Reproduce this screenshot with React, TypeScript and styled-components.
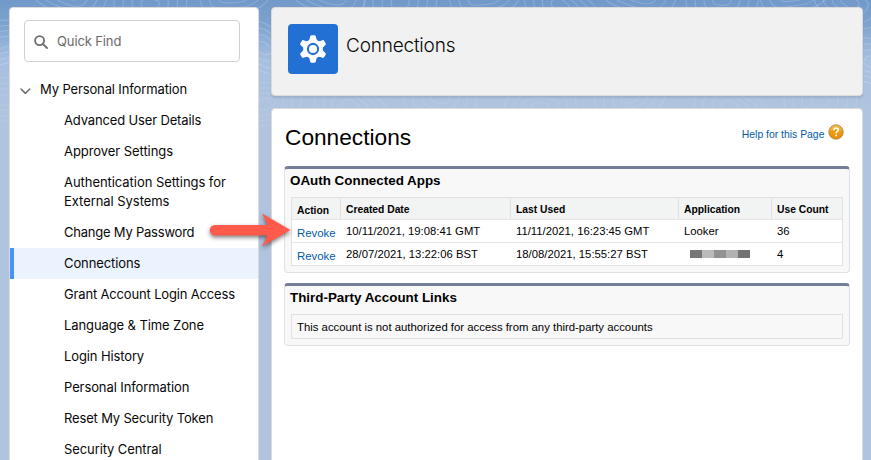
import React from "react";
import styled, { createGlobalStyle } from "styled-components";

const Global = createGlobalStyle`
  * { box-sizing: border-box; }
  html, body { margin: 0; height: 460px; overflow: hidden; }
  body { background: #b0c4df; color: #080707; font-family: "Liberation Sans", Arial, sans-serif; }
`;

const Page = styled.div`
  position: relative;
  display: flex;
  gap: 12px;
  width: 871px;
  height: 460px;
  padding: 7px 8px 0 9px;
  overflow: hidden;
  background: linear-gradient(to bottom, #7199c9 0, #7ea3d0 25px, #a7bfe0 60px, #b0c4df 110px);
`;

const Contours = styled.svg`
  position: absolute;
  inset: 0;
`;

const Sidebar = styled.nav`
  position: relative;
  flex-shrink: 0;
  width: 250px;
  height: 470px;
  padding-top: 12px;
  background: #fff;
  border: 1px solid #dddbda;
  border-radius: 4px;
  font-family: Inter, sans-serif;
  font-size: 13px;
  line-height: 19px;
`;

const Search = styled.div`
  display: flex;
  align-items: center;
  gap: 9px;
  width: 216px;
  height: 42px;
  margin-left: 14px;
  padding: 0 0 0 9px;
  border: 1px solid #d2d0ce;
  border-radius: 4px;
  color: #6b6967;
  letter-spacing: -0.12px;
  svg { position: relative; top: 1px; }
`;

const Group = styled.div`
  display: flex;
  align-items: center;
  gap: 9px;
  height: 31px;
  margin-top: 12px;
  padding-left: 10px;
  letter-spacing: -0.13px;
  svg { position: relative; top: 1px; }
`;

const Item = styled.div<{ $active?: boolean; $spacing?: number }>`
  padding: 6px 14px 6px ${(p) => (p.$active ? 50 : 54)}px;
  border-left: ${(p) => (p.$active ? "4px solid #4592fa" : "0")};
  background: ${(p) => (p.$active ? "#ebf3fe" : "transparent")};
  letter-spacing: ${(p) => p.$spacing ?? 0}px;
  white-space: pre;
`;

const Main = styled.main`
  position: relative;
  display: flex;
  flex-direction: column;
  gap: 12px;
  width: 592px;
`;

const Header = styled.header`
  display: flex;
  flex-shrink: 0;
  gap: 8px;
  height: 89px;
  padding: 16px;
  background: #f1f1f1;
  border: 1px solid #dddbda;
  border-radius: 4px;
  box-shadow: 0 2px 2px rgba(0, 0, 0, 0.1);
`;

const IconTile = styled.div`
  display: grid;
  place-items: center;
  width: 50px;
  height: 50px;
  border-radius: 4px;
  background: #2370d5;
`;

const HeaderTitle = styled.div`
  padding-top: 9px;
  font-family: Inter, sans-serif;
  font-size: 19px;
  font-weight: 300;
  letter-spacing: -0.2px;
  line-height: 26px;
`;

const Panel = styled.section`
  flex-shrink: 0;
  height: 370px;
  padding: 14px 12px;
  background: #fff;
  border: 1px solid #dddbda;
  border-radius: 4px;
`;

const TitleRow = styled.div`
  display: flex;
  justify-content: space-between;
  height: 43px;
  padding: 0 5px 0 1px;
`;

const Title = styled.h1`
  margin: 0;
  color: #000;
  font-size: 22.7px;
  font-weight: 400;
  line-height: 28px;
`;

const Help = styled.a`
  display: flex;
  gap: 4px;
  padding-right: 0.6px;
  color: #015ba7;
  font-size: 10.4px;
  line-height: 23px;
  svg { margin-top: 1px; }
`;

const Block = styled.section<{ $height: number }>`
  height: ${(p) => p.$height}px;
  margin-bottom: 10px;
  padding: 4px 6px 0;
  background: #f8f8f8;
  border: 1px solid #dfe1e5;
  border-top: 3px solid #747e96;
  border-radius: 4px;
`;

const BlockTitle = styled.h2`
  height: 24px;
  margin: 0 0 0 -1px;
  color: #000;
  font-size: 13.4px;
  font-weight: 700;
  line-height: 15px;
`;

const Table = styled.div`
  width: 552px;
  border: 1px solid #dfe1e5;
  background: #fff;
  color: #000;
`;

const Row = styled.div<{ $head?: boolean; $last?: boolean }>`
  display: grid;
  grid-template-columns: 49px 170px 168px 93px 70px;
  height: ${(p) => (p.$head ? 22 : p.$last ? 22 : 23)}px;
  border-bottom: ${(p) => (p.$last ? "0" : "1px solid #e4e6e9")};
  background: ${(p) => (p.$head ? "#f2f3f3" : "#fff")};
  font-size: ${(p) => (p.$head ? 10.3 : 11.3)}px;
  font-weight: ${(p) => (p.$head ? 700 : 400)};
`;

const Cell = styled.div<{ $divider?: boolean; $drop?: number }>`
  padding: ${(p) => 4 + (p.$drop ?? 0)}px 0 0 5px;
  border-right: ${(p) => (p.$divider ? "1px solid #dfe1e5" : "0")};
  line-height: 15px;
  white-space: nowrap;
`;

const Revoke = styled.a`
  color: #015ba7;
  font-size: 11.4px;
`;

const Redacted = styled.div`
  display: flex;
  width: 60px;
  height: 8px;
  margin: 3px 0 0 6px;
`;

const Shade = styled.span<{ $color: string }>`
  flex: 1;
  background: ${(p) => p.$color};
`;

const Notice = styled.div`
  width: 552px;
  height: 25px;
  padding-left: 5px;
  border: 1px solid #dfe1e5;
  font-size: 11.35px;
  line-height: 25px;
  color: #000;
`;

const Arrow = styled.svg`
  position: absolute;
  left: 200px;
  top: 205px;
  filter: drop-shadow(0 2px 2px rgba(0, 0, 0, 0.5));
`;

const items: { label: string; active?: boolean; spacing?: number }[] = [
  { label: "Advanced User Details", spacing: -0.15 },
  { label: "Approver Settings", spacing: -0.06 },
  { label: "Authentication Settings for\nExternal Systems", spacing: -0.05 },
  { label: "Change My Password", spacing: -0.22 },
  { label: "Connections", active: true, spacing: -0.1 },
  { label: "Grant Account Login Access", spacing: -0.16 },
  { label: "Language & Time Zone", spacing: -0.1 },
  { label: "Login History", spacing: -0.12 },
  { label: "Personal Information", spacing: -0.1 },
  { label: "Reset My Security Token", spacing: -0.16 },
  { label: "Security Central", spacing: -0.1 },
];

const rows = [
  { created: "10/11/2021, 19:08:41 GMT", used: "11/11/2021, 16:23:45 GMT", app: "Looker", count: 36 },
  { created: "28/07/2021, 13:22:06 BST", used: "18/08/2021, 15:55:27 BST", app: null, count: 4 },
];

const shades = ["#777", "#bbb", "#929292", "#b2b2b2", "#737373"];

const centers = [
  [4, 42], [70, -6], [150, 4], [235, -8], [263, 48], [330, -7], [400, 3],
  [485, -6], [560, 5], [640, -8], [722, 0], [795, -10], [850, 2], [873, 62],
  [5, 100], [266, 104], [350, 106], [440, 98], [540, 108], [630, 97], [730, 107], [820, 100],
];

export default function App() {
  return (
    <>
      <Global />
      <Page>
        <Contours width="871" height="130" fill="none" stroke="#fff">
          {centers.map(([x, y], i) => (
            <g key={i} opacity={y > 90 ? 0.1 : 0.19} transform={`translate(${x} ${y}) rotate(${(i * 37) % 50 - 25})`}>
              {[1, 2, 3, 4].map((n) => (
                <path
                  key={n}
                  d={`M${-9 * n} 0C${-9 * n} ${-5 * n} ${-3 * n} ${-7 * n} ${2 * n} ${-5 * n}S${10 * n} ${-4 * n} ${9 * n} ${n}S${3 * n} ${6 * n} ${-2 * n} ${5 * n}S${-9 * n} ${4 * n} ${-9 * n} 0Z`}
                />
              ))}
            </g>
          ))}
        </Contours>
        <Sidebar>
          <Search>
            <svg width="14" height="14" viewBox="0 0 14 14" fill="none" stroke="#706e6b" strokeWidth="1.8">
              <circle cx="5.6" cy="5.6" r="4.5" />
              <path d="M8.8 8.8L13 13" strokeLinecap="round" />
            </svg>
            Quick Find
          </Search>
          <Group>
            <svg width="11" height="8" viewBox="0 0 11 8" fill="none" stroke="#706e6b" strokeWidth="1.5">
              <path d="M1 2L5.4 6.4L9.8 2" strokeLinecap="round" strokeLinejoin="round" />
            </svg>
            My Personal Information
          </Group>
          {items.map((it) => (
            <Item key={it.label} $active={it.active} $spacing={it.spacing}>{it.label}</Item>
          ))}
        </Sidebar>
        <Main>
          <Header>
            <IconTile>
              <svg width="28" height="28" viewBox="-14 -14 28 28">
                <g fill="#fff">
                  <circle r="9.7" />
                  {[0, 60, 120, 180, 240, 300].map((a) => (
                    <path key={a} transform={`rotate(${a})`} d="M-4.6 -8Q-3.2 -9.2 -3 -11.8Q-2.9 -13.8 -1.4 -13.8H1.4Q2.9 -13.8 3 -11.8Q3.2 -9.2 4.6 -8Z" />
                  ))}
                </g>
                <circle r="5.1" fill="none" stroke="#2370d5" strokeWidth="2.1" />
              </svg>
            </IconTile>
            <HeaderTitle>Connections</HeaderTitle>
          </Header>
          <Panel>
            <TitleRow>
              <Title>Connections</Title>
              <Help>
                Help for this Page
                <svg width="16" height="16" viewBox="0 0 16 16">
                  <defs>
                    <linearGradient id="orb" x1="0" y1="0" x2="0" y2="1">
                      <stop offset="0" stopColor="#f8c458" />
                      <stop offset="0.5" stopColor="#f29a10" />
                      <stop offset="1" stopColor="#e98a02" />
                    </linearGradient>
                  </defs>
                  <circle cx="8" cy="8" r="7.2" fill="url(#orb)" stroke="#a87837" strokeWidth="0.8" />
                  <path d="M5.8 6.1C5.9 4.6 6.8 4 8 4C9.4 4 10.3 4.8 10.3 5.9C10.3 7.5 8.2 7.5 8.1 9.4" fill="none" stroke="#fff" strokeWidth="1.6" />
                  <circle cx="8.1" cy="11.5" r="1" fill="#fff" />
                </svg>
              </Help>
            </TitleRow>
            <Block $height={107}>
              <BlockTitle>OAuth Connected Apps</BlockTitle>
              <Table>
                <Row $head>
                  <Cell $divider $drop={1}>Action</Cell>
                  <Cell $divider>Created Date</Cell>
                  <Cell $divider>Last Used</Cell>
                  <Cell $divider>Application</Cell>
                  <Cell>Use Count</Cell>
                </Row>
                {rows.map((r, i) => (
                  <Row key={r.created} $last={i === rows.length - 1}>
                    <Cell $drop={2}><Revoke>Revoke</Revoke></Cell>
                    <Cell>{r.created}</Cell>
                    <Cell>{r.used}</Cell>
                    <Cell>
                      {r.app ?? (
                        <Redacted>{shades.map((c) => <Shade key={c} $color={c} />)}</Redacted>
                      )}
                    </Cell>
                    <Cell>{r.count}</Cell>
                  </Row>
                ))}
              </Table>
            </Block>
            <Block $height={63}>
              <BlockTitle>Third-Party Account Links</BlockTitle>
              <Notice>This account is not authorized for access from any third-party accounts</Notice>
            </Block>
          </Panel>
        </Main>
        <Arrow width="100" height="55" viewBox="200 205 100 55">
          <path
            d="M215 225H267.5L262 213.5L290.5 230L262 246.5L267.5 235.5H215A5.25 5.25 0 0 1 215 225Z"
            fill="#ff5a4a"
          />
        </Arrow>
      </Page>
    </>
  );
}
